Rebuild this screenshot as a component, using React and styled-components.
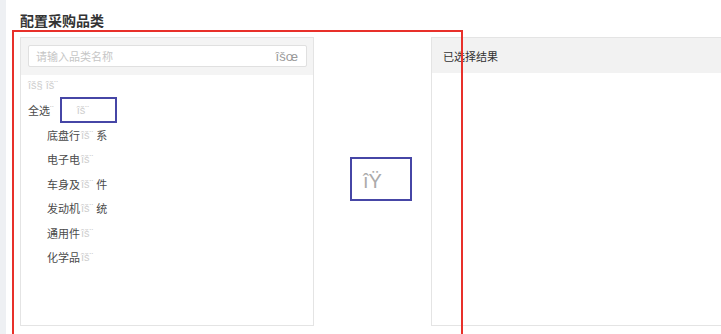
import React from 'react';
import styled, { createGlobalStyle } from 'styled-components';

const GlobalStyle = createGlobalStyle`
  html, body {
    margin: 0;
    padding: 0;
    background: #fff;
    font-family: "Liberation Sans", "Noto Sans CJK SC", sans-serif;
  }
`;

const Page = styled.div`
  position: relative;
  display: flex;
  width: 721px;
  height: 334px;
  overflow: hidden;
  background: #fff;
`;

const SideStrip = styled.div`
  width: 6px;
  flex: none;
  background: #eef0f3;
`;

const Main = styled.div`
  flex: 1;
  padding: 12px 0 0 14px;
  min-width: 0;
`;

const Title = styled.h2`
  margin: 0;
  font-size: 14px;
  line-height: 18px;
  font-weight: bold;
  color: #333;
`;

const Transfer = styled.div`
  display: flex;
  margin-top: 7px;
  height: 289px;
`;

const Panel = styled.div`
  box-sizing: border-box;
  width: ${(p) => p.$width}px;
  flex: none;
  border: 1px solid #e4e4e4;
  background: #fff;
`;

const SearchHead = styled.div`
  background: #f4f4f4;
  padding: 7px 6px 8px 7px;
`;

const SearchBox = styled.div`
  box-sizing: border-box;
  height: 22px;
  display: flex;
  align-items: center;
  justify-content: space-between;
  padding: 0 8px 0 7px;
  background: #fff;
  border: 1px solid #e0e0e0;
  border-radius: 2px;
`;

const Placeholder = styled.span`
  font-size: 11px;
  color: #c6c6c6;
`;

const SearchIcon = styled.span`
  font-size: 13px;
  color: #9a9a9a;
`;

const Tree = styled.div`
  padding: 0 7px;
`;

const Toolbar = styled.div`
  height: 20px;
  display: flex;
  align-items: center;
  font-size: 11px;
  color: #cdcdcd;
  margin-bottom: 3px;
`;

const Row = styled.div`
  height: 24.5px;
  display: flex;
  align-items: center;
  padding-left: ${(p) => (p.$child ? 19 : 0)}px;
  font-size: 11px;
  color: #4a4a4a;
  white-space: pre;
`;

const Faint = styled.span`
  color: #cdcdcd;
  padding-left: ${(p) => p.$pad || 0}px;
`;

const Middle = styled.div`
  width: 117px;
  flex: none;
  display: flex;
  align-items: center;
  justify-content: center;
  font-size: 20px;
  color: #ababab;
`;

const RightPanel = styled(Panel)`
  width: 320px;
  border-right: none;
`;

const ResultHead = styled.div`
  height: 35px;
  display: flex;
  align-items: center;
  padding-left: 11px;
  background: #f2f2f2;
  font-size: 11px;
  color: #333;
`;

const Frame = styled.div`
  position: absolute;
  box-sizing: border-box;
  left: ${(p) => p.$x}px;
  top: ${(p) => p.$y}px;
  width: ${(p) => p.$w}px;
  height: ${(p) => p.$h}px;
  border: 2px solid ${(p) => p.$color};
  pointer-events: none;
`;

const items = [
  ['底盘行', 'îš¨', '系'],
  ['电子电', 'îš¨', ''],
  ['车身及', 'îš¨', '件'],
  ['发动机', 'îš¨', '统'],
  ['通用件', 'îš¨', ''],
  ['化学品', 'îš¨', ''],
];

const App = () => {
  return (
    <>
      <GlobalStyle />
      <Page>
        <SideStrip />
        <Main>
          <Title>配置采购品类</Title>
          <Transfer>
            <Panel $width={294}>
              <SearchHead>
                <SearchBox>
                  <Placeholder>请输入品类名称</Placeholder>
                  <SearchIcon>îšœ</SearchIcon>
                </SearchBox>
              </SearchHead>
              <Tree>
                <Toolbar>îš§ îš¨</Toolbar>
                <Row>
                  全选<Faint>¨</Faint>
                  <Faint $pad={23}>îš¨</Faint>
                </Row>
                {items.map(([name, glyph, tail]) => (
                  <Row $child key={name}>
                    {name}
                    <Faint $pad={1}>{glyph}</Faint>
                    {tail && ` ${tail}`}
                  </Row>
                ))}
              </Tree>
            </Panel>
            <Middle>îŸ</Middle>
            <RightPanel>
              <ResultHead>已选择结果</ResultHead>
            </RightPanel>
          </Transfer>
        </Main>
        <Frame $x={12} $y={30} $w={451} $h={320} $color="#e8302a" />
        <Frame $x={60} $y={97} $w={57} $h={26} $color="#4646a6" />
        <Frame $x={350} $y={157} $w={62} $h={44} $color="#4646a6" />
      </Page>
    </>
  );
};

export default App;
